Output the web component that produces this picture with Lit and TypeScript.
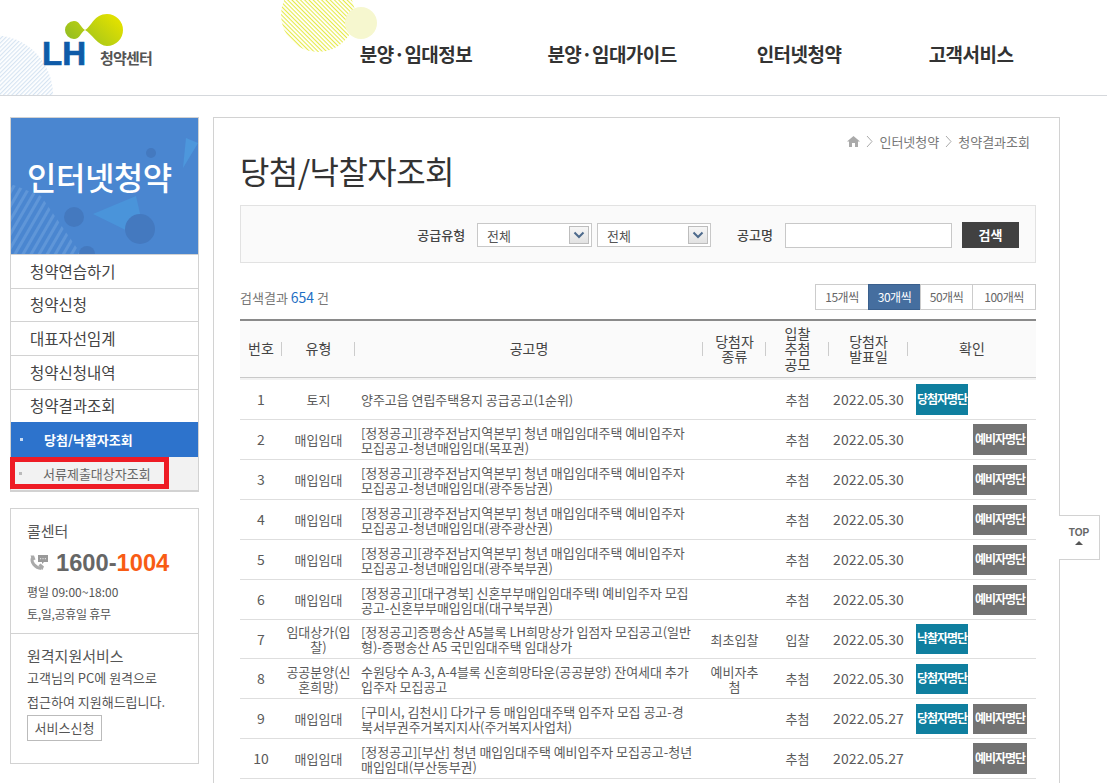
import { LitElement, html, css, svg } from "lit";
import { customElement } from "lit/decorators.js";

const menu = ["청약연습하기", "청약신청", "대표자선임계", "청약신청내역", "청약결과조회"];
const navItems = ["분양·임대정보", "분양·임대가이드", "인터넷청약", "고객서비스"];
const perPage = ["15개씩", "30개씩", "50개씩", "100개씩"];

interface Row {
  no: number;
  type: string;
  title: string;
  kind?: string;
  method: string;
  date: string;
  win?: string;
  reserve?: boolean;
  short?: boolean;
}

const rows: Row[] = [
  { no: 1, type: "토지", title: "양주고읍 연립주택용지 공급공고(1순위)", method: "추첨", date: "2022.05.30", win: "당첨자명단" },
  { no: 2, type: "매입임대", title: "[정정공고][광주전남지역본부] 청년 매입임대주택 예비입주자 모집공고-청년매입임대(목포권)", method: "추첨", date: "2022.05.30", reserve: true },
  { no: 3, type: "매입임대", title: "[정정공고][광주전남지역본부] 청년 매입임대주택 예비입주자 모집공고-청년매입임대(광주동남권)", method: "추첨", date: "2022.05.30", reserve: true },
  { no: 4, type: "매입임대", title: "[정정공고][광주전남지역본부] 청년 매입임대주택 예비입주자 모집공고-청년매입임대(광주광산권)", method: "추첨", date: "2022.05.30", reserve: true },
  { no: 5, type: "매입임대", title: "[정정공고][광주전남지역본부] 청년 매입임대주택 예비입주자 모집공고-청년매입임대(광주북부권)", method: "추첨", date: "2022.05.30", reserve: true },
  { no: 6, type: "매입임대", title: "[정정공고][대구경북] 신혼부부매입임대주택I 예비입주자 모집공고-신혼부부매입임대(대구북부권)", method: "추첨", date: "2022.05.30", reserve: true },
  { no: 7, type: "임대상가(입찰)", title: "[정정공고]증평송산 A5블록 LH희망상가 입점자 모집공고(일반형)-증평송산 A5 국민임대주택 임대상가", kind: "최초입찰", method: "입찰", date: "2022.05.30", win: "낙찰자명단", short: true },
  { no: 8, type: "공공분양(신혼희망)", title: "수원당수 A-3, A-4블록 신혼희망타운(공공분양) 잔여세대 추가 입주자 모집공고", kind: "예비자추첨", method: "추첨", date: "2022.05.30", win: "당첨자명단" },
  { no: 9, type: "매입임대", title: "[구미시, 김천시] 다가구 등 매입임대주택 입주자 모집 공고-경북서부권주거복지지사(주거복지사업처)", method: "추첨", date: "2022.05.27", win: "당첨자명단", reserve: true },
  { no: 10, type: "매입임대", title: "[정정공고][부산] 청년 매입임대주택 예비입주자 모집공고-청년매입임대(부산동부권)", method: "추첨", date: "2022.05.27", reserve: true },
];

const chevron = html`<span class="arrow"><svg width="12" height="8" viewBox="0 0 12 8"><path d="M1.5 1.5 6 6l4.500-4.500" fill="none" stroke="#4d6a8c" stroke-width="2"/></svg></span>`;

@customElement("app-root")
export class AppRoot extends LitElement {
  static styles = css`
    :host {
      display: block;
      position: relative;
      height: 783px;
      overflow: hidden;
      background: #fff;
      font-family: "Noto Sans CJK KR", "Noto Sans", sans-serif;
      color: #555;
      font-size: 13px;
    }
    * { box-sizing: border-box; }

    .header {
      position: relative;
      height: 96px;
      border-bottom: 1px solid #d5d8dc;
      overflow: hidden;
    }
    .deco { position: absolute; left: 0; top: 0; }
    .logo {
      position: absolute;
      left: 42px;
      top: 38px;
      display: flex;
      align-items: flex-end;
      gap: 14px;
      height: 32px;
    }
    .lh {
      font-family: "Liberation Sans", sans-serif;
      font-weight: 700;
      font-size: 33px;
      line-height: 32px;
      color: #0f5ba8;
      -webkit-text-stroke: 0.7px #0f5ba8;
      width: 44px;
    }
    .logo-sub {
      font-size: 15px;
      font-weight: 700;
      color: #555;
      letter-spacing: -0.8px;
      line-height: 24px;
      white-space: nowrap;
    }
    .nav {
      position: relative;
      display: grid;
      grid-template-columns: 192px 200px 174px 170px;
      margin-left: 320px;
      width: 736px;
      padding-top: 42px;
    }
    .nav a {
      text-align: center;
      font-size: 19px;
      line-height: 24px;
      font-weight: 700;
      color: #333;
      letter-spacing: -0.55px;
      white-space: nowrap;
    }

    .body {
      display: flex;
      align-items: flex-start;
      gap: 14px;
      padding: 21px 0 0 10px;
    }
    .side { width: 189px; flex: none; }
    .side-nav { border: 1px solid #d2d2d2; border-bottom-width: 2px; }
    .banner {
      position: relative;
      height: 136px;
      background: #4a86d0;
      color: #fff;
      overflow: hidden;
    }
    .banner svg { position: absolute; left: 0; top: 0; }
    .banner h2 {
      position: relative;
      margin: 0;
      padding: 36px 0 0 16px;
      font-size: 32px;
      line-height: 44px;
      font-weight: 500;
      letter-spacing: -0.5px;
      white-space: nowrap;
    }
    .menu-item {
      height: 34px;
      line-height: 33px;
      border-top: 1px solid #d2d2d2;
      padding-left: 19px;
      font-size: 15.500px;
      color: #444;
    }
    .menu-item:nth-child(3), .menu-item:nth-child(6) { height: 33px; line-height: 31px; }
    .menu-item:nth-child(5) { line-height: 32px; }
    .sub-on {
      display: flex;
      align-items: center;
      height: 35px;
      background: #2d73cc;
      color: #fff;
      font-size: 13px;
      font-weight: 700;
    }
    .dot { width: 3px; height: 3px; margin: 0 21px 0 9px; background: #c9dcf3; flex: none; }
    .sub-off { background: #f2f2f2; height: 33px; }
    .mark {
      display: flex;
      align-items: center;
      width: 159px;
      height: 32px;
      margin-left: -1px;
      border: 5px solid #ee1c25;
      font-size: 13px;
      color: #666;
      white-space: nowrap;
    }
    .mark .dot { background: #bbb; margin: 0 21px 0 4px; }

    .call {
      margin-top: 16px;
      height: 256px;
      border: 1px solid #d2d2d2;
    }
    .call-top { height: 125px; padding: 11px 16px 0; border-bottom: 1px solid #d2d2d2; }
    .call h3 {
      margin: 0;
      font-size: 15px;
      line-height: 22px;
      font-weight: 400;
      color: #555;
    }
    .phone {
      display: flex;
      align-items: center;
      gap: 7px;
      margin: 7px 0 4px 2px;
      height: 28px;
      font-family: "Liberation Sans", sans-serif;
      font-size: 23.700px;
      font-weight: 700;
      color: #666;
    }
    .phone b { color: #f85c14; }
    .small { font-size: 12px; line-height: 22px; color: #555; white-space: nowrap; }
    .small.tight { letter-spacing: -0.3px; }
    .remote { padding: 12px 16px 0; }
    .remote h3 { line-height: 20px; }
    .remote .small { font-size: 13px; line-height: 24px; }
    .apply {
      display: block;
      margin-top: 1px;
      border: 1px solid #bbb;
      height: 26px;
      width: 75px;
      text-align: center;
      line-height: 24px;
      font-size: 13px;
      color: #555;
      white-space: nowrap;
    }

    .main {
      width: 847px;
      height: 700px;
      flex: none;
      border: 1px solid #d2d2d2;
      padding: 0 23px 0 26px;
    }
    .crumb {
      display: flex;
      justify-content: flex-end;
      align-items: center;
      gap: 6px;
      height: 22px;
      margin: 12px 6px 0 0;
      font-size: 13px;
      color: #777;
    }
    .main h1 {
      margin: -5px 0 0;
      font-size: 32px;
      line-height: 46px;
      font-weight: 400;
      color: #333;
      letter-spacing: -0.6px;
      white-space: nowrap;
    }
    .search {
      display: flex;
      align-items: center;
      justify-content: flex-end;
      margin-top: 12px;
      height: 58px;
      background: #fafafa;
      border: 1px solid #e2e2e2;
      padding: 2px 16px 0 0;
    }
    .search label { font-size: 13px; font-weight: 500; color: #444; white-space: nowrap; margin-top: -2px; }
    .select {
      display: flex;
      align-items: center;
      justify-content: space-between;
      height: 24px;
      width: 114px;
      border: 1px solid #c8c8c8;
      background: #fff;
      padding: 0 2px 0 9px;
      font-size: 13px;
      color: #555;
    }
    .select.first { width: 115px; margin-left: 12px; margin-right: 5px; }
    .arrow {
      display: flex;
      align-items: center;
      justify-content: center;
      width: 20px;
      height: 18px;
      border: 1px solid #bdbdbd;
      background: linear-gradient(#f6f6f6, #e2e2e2);
    }
    .search .name { margin-left: 26px; }
    .input {
      width: 167px;
      height: 25px;
      margin-left: 12px;
      border: 1px solid #c8c8c8;
      background: #fff;
    }
    .go {
      width: 57px;
      height: 26px;
      margin-left: 10px;
      background: #414141;
      color: #fff;
      font-size: 13px;
      font-weight: 700;
      text-align: center;
      line-height: 26px;
    }
    .tools {
      display: flex;
      align-items: center;
      justify-content: space-between;
      margin-top: 21px;
      height: 26px;
    }
    .count { font-size: 13px; color: #777; }
    .count b { font-weight: 400; color: #1e6fc4; font-size: 14px; }
    .pager { display: flex; }
    .pager span {
      height: 26px;
      width: 53px;
      margin-left: -1px;
      border: 1px solid #ccc;
      text-align: center;
      line-height: 24px;
      font-size: 12px;
      color: #666;
      letter-spacing: -0.5px;
    }
    .pager span:first-child { width: 54px; }
    .pager span:last-child { width: 64px; }
    .pager span.on { background: #456e9f; border-color: #3a5f8c; color: #fff; }

    table {
      width: 796px;
      margin-top: 9px;
      table-layout: fixed;
      border-collapse: separate;
      border-spacing: 0;
    }
    th {
      height: 59px;
      padding: 0;
      border-top: 2px solid #8a8a8a;
      border-bottom: 1px solid #c9c9c9;
      background: #fafafa linear-gradient(#ccc, #ccc) right center / 1px 14px no-repeat;
      font-size: 14px;
      line-height: 15.500px;
      font-weight: 400;
      color: #444;
      text-align: center;
    }
    th:last-child { background-image: none; }
    .gap td { height: 2px; padding: 0; background: #f2f2f2; border: 0; }
    td {
      height: 40px;
      padding: 0;
      border-bottom: 1px solid #dedede;
      text-align: center;
      font-size: 13px;
      line-height: 15px;
      color: #5a5a5a;
    }
    .short td { height: 39px; }
    td.no { font-size: 14px; }
    td.title { text-align: left; padding: 0 8px 0 6px; letter-spacing: -0.05px; }
    td.kind { padding: 0 6px; }
    td.date { font-size: 14px; white-space: nowrap; letter-spacing: 0.1px; }
    .btns {
      display: grid;
      grid-template-columns: 52px 54px;
      column-gap: 5px;
      padding-left: 8px;
    }
    .btn {
      height: 30px;
      line-height: 28px;
      text-align: center;
      color: #fff;
      font-size: 12px;
      font-weight: 700;
      letter-spacing: -1px;
      white-space: nowrap;
    }
    .tall .btn { height: 31px; line-height: 29px; }
    .btn.win { grid-column: 1; background: #0f7f9f; }
    .btn.res { grid-column: 2; background: #737373; }

    .top {
      position: absolute;
      left: 1059px;
      top: 515px;
      width: 41px;
      height: 45px;
      background: #fff;
      border: 1px solid #d2d2d2;
      border-left: 0;
      text-align: center;
      font-family: "Liberation Sans", sans-serif;
      font-size: 10px;
      font-weight: 700;
      color: #666;
      padding-top: 11px;
      line-height: 11px;
    }
    .top i {
      display: block;
      width: 0;
      margin: 3px auto 0;
      border: 4px solid transparent;
      border-top: 0;
      border-bottom: 4px solid #555;
    }
  `;

  private renderDeco() {
    return html`<svg class="deco" width="420" height="95" viewBox="0 0 420 95">
      <defs>
        <pattern id="hy" width="3" height="3" patternUnits="userSpaceOnUse" patternTransform="rotate(45)">
          <rect width="3" height="1.100" fill="#e6ea4a"/>
        </pattern>
        <pattern id="hb" width="3" height="3" patternUnits="userSpaceOnUse" patternTransform="rotate(-45)">
          <rect width="3" height="1.200" fill="#d6e4f2"/>
        </pattern>
        <linearGradient id="lime" gradientUnits="userSpaceOnUse" x1="110" y1="14" x2="80" y2="46">
          <stop offset="0" stop-color="#e0e000"/>
          <stop offset="1" stop-color="#98c021"/>
        </linearGradient>
      </defs>
      <circle cx="-7" cy="95" r="60" fill="url(#hb)"/>
      <circle cx="318" cy="15" r="37" fill="url(#hy)"/>
      <circle cx="361" cy="23" r="16" fill="#f6f7cf"/>
      <path fill="url(#lime)" d="M85 30C92 26 94 14 107 14A16 16 0 0 1 107 46C98 46 92 34 85 30Z"/>
      <path fill="url(#lime)" d="M85 30C80 33 80 39 74 39A9 9 0 0 1 74 21C80 21 80 27 85 30Z"/>
    </svg>`;
  }

  private renderBanner() {
    return svg`<svg width="187" height="136" viewBox="0 0 187 136">
      <defs>
        <pattern id="stripes" width="7" height="7" patternUnits="userSpaceOnUse" patternTransform="rotate(-60)">
          <rect width="7" height="3" fill="#5f96d8"/>
        </pattern>
      </defs>
      <path d="M0 66 30 78 70 136H0Z" fill="url(#stripes)"/>
      <path d="M175 20 187 25 172 50Z" fill="#4d97dc"/>
      <path d="M125 78 82 96 135 122Z" fill="#4a94da"/>
      <circle cx="63" cy="99" r="10" fill="#4479bf"/>
      <circle cx="129" cy="111" r="15" fill="#4479bf"/>
      <circle cx="140" cy="35" r="5" fill="#4479bf"/>
      <circle cx="76" cy="136" r="8" fill="#4479bf"/>
    </svg>`;
  }

  private renderSide() {
    return html`<aside class="side">
      <nav class="side-nav">
        <div class="banner">${this.renderBanner()}<h2>인터넷청약</h2></div>
        ${menu.map((m) => html`<div class="menu-item">${m}</div>`)}
        <div class="sub-on"><span class="dot"></span>당첨/낙찰자조회</div>
        <div class="sub-off"><div class="mark"><span class="dot"></span>서류제출대상자조회</div></div>
      </nav>
      <div class="call">
        <div class="call-top">
          <h3>콜센터</h3>
          <div class="phone">
            <svg width="20" height="16" viewBox="0 0 20 16">
              <path d="M3.500 2.500C1.500 7 6 13 12.500 13.500" fill="none" stroke="#aaa" stroke-width="3"/>
              <path d="M1.500 .5h3.500l1.500 4-3 1ZM9.500 10.500l2-2 3.500 3-1.500 3.500Z" fill="#aaa"/>
              <path d="M9 0h10v7h-4l-2 2V7H9Z" fill="#999"/>
              <path d="M11 3h1.200v1.200H11ZM13.400 3h1.200v1.200h-1.200ZM15.800 3H17v1.200h-1.200Z" fill="#ddd"/>
            </svg>
            <span>1600-<b>1004</b></span>
          </div>
          <div class="small">평일 09:00~18:00</div>
          <div class="small tight">토,일,공휴일 휴무</div>
        </div>
        <div class="remote">
          <h3>원격지원서비스</h3>
          <div class="small">고객님의 PC에 원격으로</div>
          <div class="small">접근하여 지원해드립니다.</div>
          <span class="apply">서비스신청</span>
        </div>
      </div>
    </aside>`;
  }

  private renderRow(r: Row) {
    return html`<tr class=${r.short ? "short" : ""}>
      <td class="no">${r.no}</td>
      <td>${r.type}</td>
      <td class="title">${r.title}</td>
      <td class="kind">${r.kind ?? ""}</td>
      <td>${r.method}</td>
      <td class="date">${r.date}</td>
      <td>
        <div class="btns ${[1, 2, 10].includes(r.no) ? "tall" : ""}">
          ${r.win ? html`<span class="btn win">${r.win}</span>` : ""}
          ${r.reserve ? html`<span class="btn res">예비자명단</span>` : ""}
        </div>
      </td>
    </tr>`;
  }

  render() {
    return html`
      <header class="header">
        ${this.renderDeco()}
        <div class="logo"><span class="lh">LH</span><span class="logo-sub">청약센터</span></div>
        <div class="nav">${navItems.map((n) => html`<a>${n}</a>`)}</div>
      </header>
      <div class="body">
        ${this.renderSide()}
        <main class="main">
          <div class="crumb">
            <svg width="13" height="11" viewBox="0 0 13 11"><path d="M6.500 0 13 5.500h-2V11H8V7H5v4H2V5.500H0Z" fill="#aaa"/></svg>
            <svg width="7" height="13" viewBox="0 0 7 13"><path d="M1 1l5 5.500L1 12" fill="none" stroke="#aaa"/></svg>
            <span>인터넷청약</span>
            <svg width="7" height="13" viewBox="0 0 7 13"><path d="M1 1l5 5.500L1 12" fill="none" stroke="#aaa"/></svg>
            <span>청약결과조회</span>
          </div>
          <h1>당첨/낙찰자조회</h1>
          <div class="search">
            <label>공급유형</label>
            <div class="select first">전체${chevron}</div>
            <div class="select">전체${chevron}</div>
            <label class="name">공고명</label>
            <div class="input"></div>
            <div class="go">검색</div>
          </div>
          <div class="tools">
            <div class="count">검색결과 <b>654</b> 건</div>
            <div class="pager">
              ${perPage.map((p, i) => html`<span class=${i === 1 ? "on" : ""}>${p}</span>`)}
            </div>
          </div>
          <table>
            <colgroup>
              <col style="width:42px" /><col style="width:73px" /><col style="width:348px" />
              <col style="width:63px" /><col style="width:63px" /><col style="width:79px" /><col style="width:128px" />
            </colgroup>
            <thead>
              <tr>
                <th>번호</th><th>유형</th><th>공고명</th>
                <th>당첨자<br />종류</th><th>입찰<br />추첨<br />공모</th><th>당첨자<br />발표일</th><th>확인</th>
              </tr>
              <tr class="gap"><td colspan="7"></td></tr>
            </thead>
            <tbody>${rows.map((r) => this.renderRow(r))}</tbody>
          </table>
        </main>
      </div>
      <a class="top">TOP<i></i></a>
    `;
  }
}
